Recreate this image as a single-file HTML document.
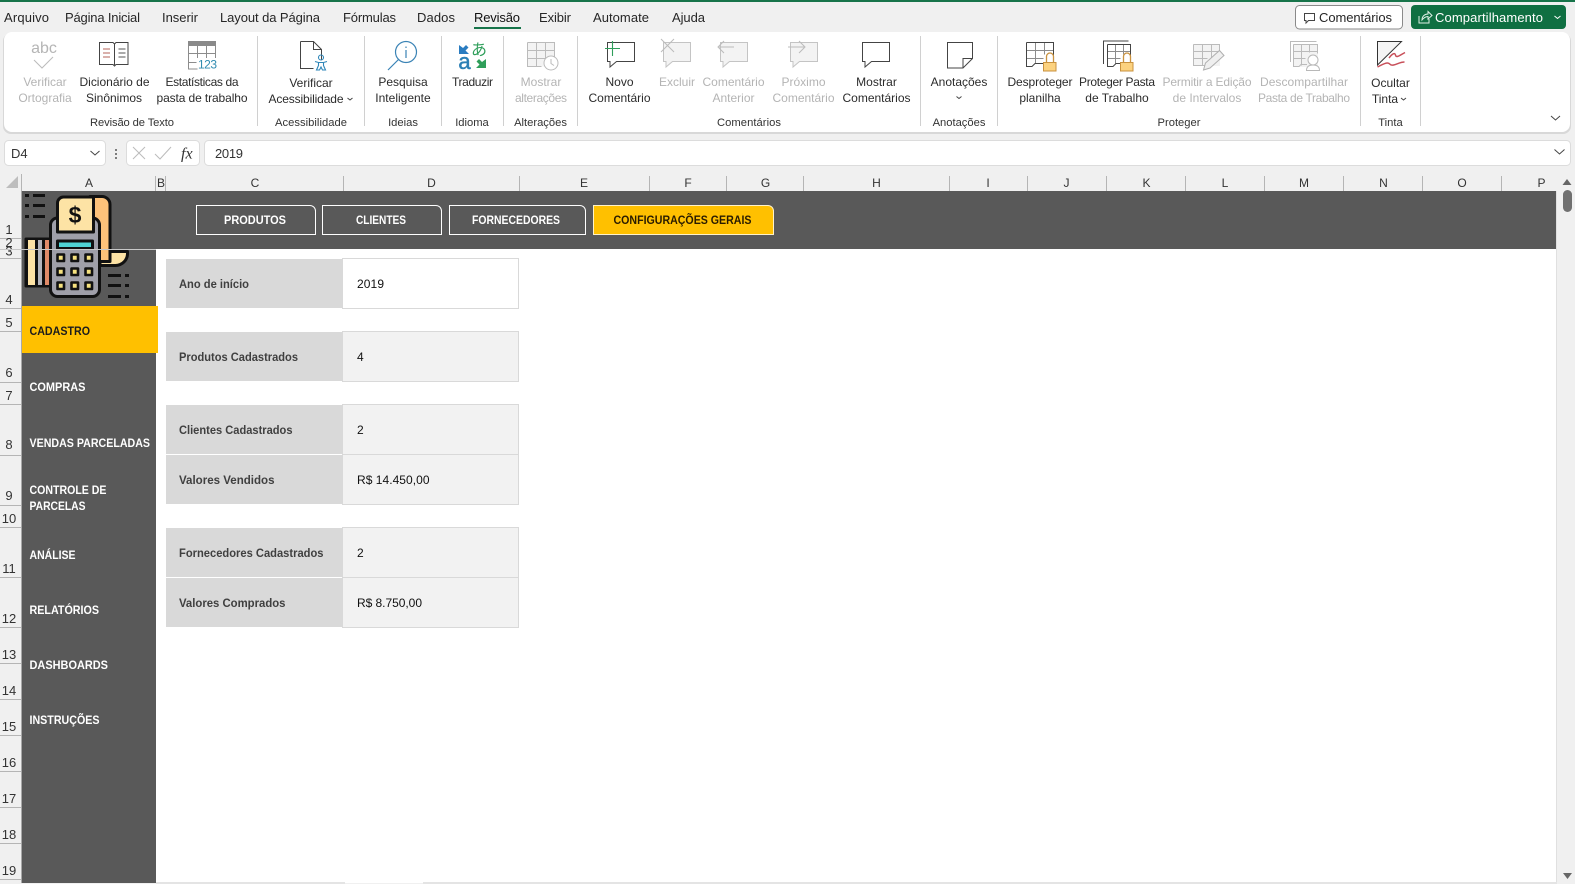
<!DOCTYPE html>
<html lang="pt-BR"><head><meta charset="utf-8"><title>Excel - Configurações Gerais</title>
<style>
html,body{margin:0;padding:0;background:#fff;overflow:hidden}
svg{display:block}
text{font-family:"Liberation Sans",sans-serif}
.t{font-size:13px;fill:#262626}
.r{font-size:12px;fill:#2b2b2b;text-anchor:middle}
.d{font-size:12px;fill:#b4b4b4;text-anchor:middle}
.g{font-size:11.2px;fill:#333;text-anchor:middle}
.c{font-size:12px;fill:#333;text-anchor:middle}
.n{font-size:13px;fill:#333;text-anchor:middle}
.s{font-size:12px;font-weight:bold;fill:#fff}
.b{font-size:12px;font-weight:bold;fill:#fff;text-anchor:middle}
.l{font-size:12px;font-weight:bold;fill:#404040}
.v{font-size:12px;fill:#111}
.i{fill:none;stroke:#444;stroke-width:1}
.x{fill:none;stroke:#bbb;stroke-width:1}
.m{fill:none;stroke:#8c8c8c;stroke-width:1}
</style></head><body>
<svg xmlns="http://www.w3.org/2000/svg" width="1575" height="884" viewBox="0 0 1575 884">
<rect width="1575" height="884" fill="#f0f0f0"/>
<rect width="1575" height="2" fill="#17744a"/>

<!-- tabs -->
<text class="t" x="4" y="22" textLength="45">Arquivo</text>
<text class="t" x="65" y="22" textLength="75">Página Inicial</text>
<text class="t" x="162" y="22" textLength="36">Inserir</text>
<text class="t" x="220" y="22" textLength="100">Layout da Página</text>
<text class="t" x="343" y="22" textLength="53">Fórmulas</text>
<text class="t" x="417" y="22" textLength="38">Dados</text>
<text class="t" x="474" y="22" textLength="46" style="fill:#111">Revisão</text>
<rect x="474" y="27" width="47" height="2" fill="#17744a"/>
<text class="t" x="539" y="22" textLength="32">Exibir</text>
<text class="t" x="593" y="22" textLength="56">Automate</text>
<text class="t" x="672" y="22" textLength="33">Ajuda</text>

<rect x="1295.5" y="5.5" width="107" height="23.5" rx="4" fill="#fff" stroke="#8a8a8a"/>
<path class="i" d="M1304.5 13.5h10v7h-6l-2.5 2.5v-2.5h-1.500z"/>
<text class="t" x="1319" y="22" textLength="73">Comentários</text>
<rect x="1411" y="5" width="155" height="24" rx="4" fill="#0f6f42"/>
<path d="M1419 16v7h10v-4M1422 20c0-4 3-6 6-6v-2.500l4 4-4 3.500v-2.500c-2 0-4 1-6 3.500z" fill="none" stroke="#dff0e6"/>
<text class="t" x="1435" y="22" textLength="108" style="fill:#fff">Compartilhamento</text>
<path d="M1554.500 16l3 2.500 3-2.500" fill="none" stroke="#fff"/>

<!-- ribbon -->
<rect x="3" y="33" width="1568" height="101" rx="8" fill="#d8d8d8"/>
<rect x="4" y="32" width="1566" height="100" rx="8" fill="#fff"/>
<g stroke="#d0d0d0" fill="none">
<path d="M257.500 36v90M364.500 36v90M441.500 36v90M503.500 36v90M577.500 36v90M920.500 36v90M997.500 36v90M1360.500 36v90M1420.500 36v90"/>
</g>

<!-- ribbon icons -->
<text x="44" y="53" text-anchor="middle" font-size="16" fill="#b5b5b5">abc</text>
<path d="M34 60l8 8 11-11" class="x"/>

<path class="i" d="M99.500 42.500h13.500l1.500 1.500 1.500-1.500h12v22h-12l-1.500 1.500-1.500-1.500h-13.500zM114.500 44v21"/>
<path d="M103 49h7M103 53h7M103 57h7" stroke="#b5635a" fill="none"/>
<path d="M118.500 49h7M118.500 53h7M118.500 57h7" stroke="#555" fill="none"/>

<rect x="188" y="41" width="28" height="5" fill="#8a8a8a"/>
<path class="m" d="M188.500 46v23h9M215.500 46v12M188.500 53.500h27M188.500 62.500h8M197.500 46v12M206.500 46v12"/>
<text x="207.500" y="68.500" text-anchor="middle" font-size="12" fill="#2f8bb0" textLength="19">123</text>

<path class="i" d="M300.500 41.500h13l8 8v10M300.500 41.500v27h13M313.500 41.500v8h8"/>
<g fill="none" stroke="#2e86b8" stroke-width="1.100"><circle cx="321" cy="57.500" r="2.500"/><path d="M315 61.500l3.500 1h5l3.500-1M318.500 62.500v3l-2 4.500h3l1.500-3 1.500 3h3l-2-4.500v-3"/></g>

<circle cx="406" cy="52" r="10.500" fill="none" stroke="#3a83b5" stroke-width="1.200"/>
<path d="M398.500 59.500L388 70" stroke="#3a83b5" stroke-width="1.200" fill="none"/>
<path d="M406 50v8M406 46.500v1.500" stroke="#3a83b5" stroke-width="1.200" fill="none"/>

<path d="M459 45v9h10l-3.500-3.500 3-3-2.500-2.500-3 3z" fill="#2a7cc0"/>
<text x="479" y="55" text-anchor="middle" font-size="16" fill="#2f9e5a" style='font-family:"Liberation Sans","Noto Sans CJK JP",sans-serif'>あ</text>
<text x="464.500" y="69" text-anchor="middle" font-size="22" fill="#2a7fb5" stroke="#2a7fb5" stroke-width=".5">a</text>
<path d="M486 59v9h-10l3.500-3.500-3-3 2.500-2.500 3 3z" fill="#2f9e5a"/>

<g class="x"><rect x="527.500" y="42.500" width="27" height="24" fill="#f3f3f3" stroke="none"/><path d="M527.500 42.500h27v16M527.500 42.500v24h14M527.500 50.500h27M527.500 58.500h27M536.500 42.500v24M545.500 42.500v16" stroke="#bbb"/><circle cx="551" cy="63" r="7" fill="#fff" stroke="#bbb"/><path d="M551 59v4.500l3 2" stroke="#bbb"/></g>

<path class="i" d="M607.500 42.500h27v19h-18l-6.500 5.500v-5.500h-2.500z"/>
<path d="M612.500 41v15M605 48.500h15" stroke="#2f9e5a" fill="none" stroke-width="1.100"/>

<path d="M663.500 42.500h27v19h-18l-6.500 5.500v-5.500h-2.500z" fill="#f3f3f3" stroke="#c4c4c4"/>
<path d="M661 39l13 13M674 39l-13 13" stroke="#bbb" fill="none"/>
<path d="M720.500 42.500h27v19h-18l-6.500 5.500v-5.500h-2.500z" fill="#f3f3f3" stroke="#c4c4c4"/>
<path d="M719 47h15M724 41l-6 6 6 6" stroke="#bbb" fill="none"/>
<path d="M790.500 42.500h27v19h-18l-6.500 5.500v-5.500h-2.500z" fill="#f3f3f3" stroke="#c4c4c4"/>
<path d="M788 47h16M799 41l6 6-6 6" stroke="#bbb" fill="none"/>
<path class="i" d="M862.500 42.500h27v19h-18l-6.500 5.500v-5.500h-2.500z"/>

<path class="i" d="M947.500 42.500h25v16l-9.500 9.500h-15.500zM972.500 58.500h-9.500v9.500"/>

<!-- Desproteger -->
<path class="m" d="M1026.500 50.500h27M1026.500 58.500h17M1035.500 42.500v21M1044.500 42.500v12"/>
<path class="i" d="M1026.500 42.500h27v13M1026.500 42.500v24h5.500l3-3h8"/>
<rect x="1043.500" y="62.500" width="12.500" height="8.500" fill="#fcd27f" stroke="#c9923f"/>
<path d="M1046.500 62v-5.500a3.500 3.500 0 0 1 7 0v5.500" fill="#fff" stroke="#c9923f" stroke-width="1.300"/>
<!-- Proteger -->
<path class="i" d="M1103.500 64v-23h25"/>
<path class="m" d="M1107.500 51.500h23M1107.500 58.500h13M1115.500 44.500v19M1123.500 44.500v10"/>
<path class="i" d="M1107.500 44.500h23v11M1107.500 44.500v22h5.500l3-3h6"/>
<rect x="1120.500" y="62.500" width="12.500" height="8.500" fill="#fcd27f" stroke="#c9923f"/>
<path d="M1123.500 62v-5.500a3.500 3.500 0 0 1 7 0v5.500" fill="#fff" stroke="#c9923f" stroke-width="1.300"/>
<!-- Permitir -->
<rect x="1193" y="44" width="27" height="22" fill="#f3f3f3"/>
<path class="x" d="M1193.500 44.500h26v8M1193.500 44.500v21h12M1193.500 51.500h26M1193.500 58.500h14M1202.500 44.500v21M1211.500 44.500v14"/>
<path d="M1203.500 70l2-7 14-12.500 4.500 5-14 12.500z" fill="#efefef" stroke="#b0b0b0"/>
<!-- Descompartilhar -->
<path class="x" d="M1290.500 62v-20.500h26"/>
<rect x="1293" y="44" width="25" height="23" fill="#f3f3f3"/>
<path class="x" d="M1293.500 44.500h24v9M1293.500 44.500v22h5.500l2-2h6M1293.500 51.500h24M1293.500 58.500h12M1301.500 44.500v21M1309.500 44.500v8"/>
<path d="M1306.500 70.500c0-4 2.500-5.500 6.500-5.500s6.500 1.500 6.500 5.500z" fill="#fff" stroke="#b8b8b8"/>
<circle cx="1313" cy="60" r="5" fill="#fff" stroke="#b8b8b8"/>
<!-- Tinta -->
<path d="M1377.500 41.500h24l-24 23.500z" fill="#f4f4f4" stroke="#333"/>
<path d="M1389 58c3-4 5-5 6-4s0 2.500 2 2.500 5-2.500 8-4M1377.500 67c4-2 7-4 10-4s2 3 6 2 7-3 11-3" fill="none" stroke="#c8505a" stroke-width="1.500"/>

<!-- ribbon text -->
<text class="d" x="45" y="86">Verificar</text><text class="d" x="45" y="102">Ortografia</text>
<text class="r" x="114.500" y="86" textLength="70">Dicionário de</text><text class="r" x="114" y="102">Sinônimos</text>
<text class="r" x="202" y="86" textLength="73">Estatísticas da</text><text class="r" x="202" y="102" textLength="91">pasta de trabalho</text>
<text class="r" x="311" y="87">Verificar</text><text class="r" x="306" y="103" textLength="75">Acessibilidade</text>
<path class="i" d="M347.500 98l2.500 2 2.500-2"/>
<text class="r" x="403" y="86">Pesquisa</text><text class="r" x="403" y="102">Inteligente</text>
<text class="r" x="472.500" y="86" textLength="41">Traduzir</text>
<text class="d" x="541" y="86">Mostrar</text><text class="d" x="541" y="102" textLength="52">alterações</text>
<text class="r" x="619.500" y="86">Novo</text><text class="r" x="619.500" y="102">Comentário</text>
<text class="d" x="677" y="86">Excluir</text>
<text class="d" x="733.500" y="86">Comentário</text><text class="d" x="733.500" y="102">Anterior</text>
<text class="d" x="803.500" y="86">Próximo</text><text class="d" x="803.500" y="102">Comentário</text>
<text class="r" x="876.500" y="86">Mostrar</text><text class="r" x="876.500" y="102">Comentários</text>
<text class="r" x="959" y="86">Anotações</text>
<path class="i" d="M956.500 96.500l2.500 2 2.500-2"/>
<text class="r" x="1040" y="86" textLength="65">Desproteger</text><text class="r" x="1040" y="102">planilha</text>
<text class="r" x="1117" y="86" textLength="76">Proteger Pasta</text><text class="r" x="1117" y="102">de Trabalho</text>
<text class="d" x="1207" y="86" textLength="89">Permitir a Edição</text><text class="d" x="1207" y="102">de Intervalos</text>
<text class="d" x="1304" y="86" textLength="88">Descompartilhar</text><text class="d" x="1304" y="102" textLength="92">Pasta de Trabalho</text>
<text class="r" x="1390.500" y="87">Ocultar</text><text class="r" x="1385" y="103">Tinta</text>
<path class="i" d="M1401 98l2.500 2 2.500-2"/>

<text class="g" x="132" y="126" textLength="84">Revisão de Texto</text>
<text class="g" x="311" y="126" textLength="72">Acessibilidade</text>
<text class="g" x="403" y="126">Ideias</text>
<text class="g" x="472" y="126">Idioma</text>
<text class="g" x="540.500" y="126">Alterações</text>
<text class="g" x="749" y="126" textLength="64">Comentários</text>
<text class="g" x="959" y="126">Anotações</text>
<text class="g" x="1179" y="126">Proteger</text>
<text class="g" x="1390.500" y="126">Tinta</text>
<path class="i" d="M1551 116l4.500 4 4.500-4"/>

<!-- formula bar -->
<rect x="4.500" y="140.500" width="101" height="25" rx="4" fill="#fff" stroke="#dcdcdc"/>
<text x="11" y="158" font-size="13" fill="#333">D4</text>
<path class="i" d="M90.500 151l4.500 4 4.500-4"/>
<path d="M116 149v2M116 153v2M116 157v2" stroke="#555" stroke-width="1.500" fill="none"/>
<rect x="126.500" y="140.500" width="73" height="25" rx="4" fill="#fff" stroke="#dcdcdc"/>
<path d="M133 147l12 12M145 147l-12 12M155 154l5 5 11-12" class="x"/>
<text x="181" y="158.500" font-size="16" font-style="italic" fill="#333" style='font-family:"Liberation Serif",serif'>fx</text>
<rect x="204.500" y="140.500" width="1366" height="25" rx="4" fill="#fff" stroke="#dcdcdc"/>
<text x="215" y="158" font-size="13" fill="#333" textLength="28">2019</text>
<path class="i" d="M1554.500 149.500l5 4.500 5-4.500"/>

<!-- column headers -->
<path d="M6 188h12v-12z" fill="#bdbdbd"/>
<g stroke="#b5b5b5" fill="none">
<path d="M21.500 174v17M155.500 176v15M165.500 176v15M343.500 176v15M519.500 176v15M649.500 176v15M726.500 176v15M803.500 176v15M949.500 176v15M1027.500 176v15M1106.500 176v15M1185.500 176v15M1264.500 176v15M1343.500 176v15M1422.500 176v15M1501.500 176v15"/>
</g>
<text class="c" x="89" y="187">A</text><text class="c" x="161" y="187">B</text><text class="c" x="255" y="187">C</text><text class="c" x="431.500" y="187">D</text>
<text class="c" x="584" y="187">E</text><text class="c" x="688" y="187">F</text><text class="c" x="765.500" y="187">G</text><text class="c" x="876.500" y="187">H</text>
<text class="c" x="988" y="187">I</text><text class="c" x="1066.500" y="187">J</text><text class="c" x="1146.500" y="187">K</text><text class="c" x="1225" y="187">L</text>
<text class="c" x="1304" y="187">M</text><text class="c" x="1383.500" y="187">N</text><text class="c" x="1462" y="187">O</text><text class="c" x="1541.500" y="187">P</text>

<!-- sheet -->
<rect x="22" y="191" width="1535" height="692" fill="#fff"/>
<rect x="22" y="191" width="1535" height="58" fill="#595959"/>
<rect x="22" y="249" width="134" height="634" fill="#595959"/>
<rect x="21" y="191" width="1" height="692" fill="#a8a8a8"/>
<rect x="1556" y="191" width="1" height="692" fill="#e0e0e0"/>
<rect x="156" y="882" width="189" height="2" fill="#e4e4e4"/><rect x="423" y="882" width="1134" height="2" fill="#e4e4e4"/>

<!-- row headers -->
<g stroke="#b5b5b5" fill="none">
<path d="M0 238.500h21M0 249.500h21M0 258.500h21M0 308.500h21M0 331.500h21M0 382.500h21M0 404.500h21M0 455.500h21M0 505.500h21M0 527.500h21M0 577.500h21M0 627.500h21M0 663.500h21M0 699.500h21M0 735.500h21M0 771.500h21M0 807.500h21M0 843.500h21M0 879.500h21"/>
</g>
<text class="n" x="9" y="234">1</text><text class="n" x="9" y="247" font-size="10">2</text><text class="n" x="9" y="255.500">3</text>
<text class="n" x="9" y="304">4</text><text class="n" x="9" y="327">5</text><text class="n" x="9" y="377">6</text><text class="n" x="9" y="400">7</text>
<text class="n" x="9" y="449">8</text><text class="n" x="9" y="500">9</text><text class="n" x="9" y="523">10</text><text class="n" x="9" y="573">11</text>
<text class="n" x="9" y="623">12</text><text class="n" x="9" y="659">13</text><text class="n" x="9" y="695">14</text><text class="n" x="9" y="731">15</text>
<text class="n" x="9" y="767">16</text><text class="n" x="9" y="803">17</text><text class="n" x="9" y="839">18</text><text class="n" x="9" y="875">19</text>

<!-- logo -->
<g stroke="#111" stroke-width="3" stroke-linejoin="round">
<rect x="26" y="239" width="25" height="47" fill="#111"/>
<rect x="28" y="240" width="7" height="45" fill="#fde3a5" stroke="none"/>
<rect x="38" y="240" width="4" height="45" fill="#b5b5bd" stroke="none"/>
<rect x="45" y="240" width="5" height="45" fill="#e08a68" stroke="none"/>
<path d="M90 196.500h12a8 8 0 0 1 8 8v60H96z" fill="#fdc27a"/>
<path d="M110 251.500h17.500v2a12 12 0 0 1-12 12H100v-4h10z" fill="#fde3a5"/>
<rect x="50.500" y="218" width="49" height="78.500" rx="7" fill="#9f9fa9"/>
<path d="M57.500 232v-29a6 6 0 0 1 6-6h30v35z" fill="#fde3a5"/>
<rect x="57.500" y="241" width="35" height="7.500" fill="#4fd3d3"/>
<g fill="#f6e27f" stroke-width="2.600">
<rect x="57.500" y="254.500" width="6.500" height="6.500"/><rect x="71.500" y="254.500" width="6.500" height="6.500"/><rect x="85.500" y="254.500" width="6.500" height="6.500"/>
<rect x="57.500" y="268.500" width="6.500" height="6.500"/><rect x="71.500" y="268.500" width="6.500" height="6.500"/><rect x="85.500" y="268.500" width="6.500" height="6.500"/>
<rect x="57.500" y="282.500" width="6.500" height="6.500"/><rect x="71.500" y="282.500" width="6.500" height="6.500"/><rect x="85.500" y="282.500" width="6.500" height="6.500"/>
</g>
</g>
<text x="75" y="223" text-anchor="middle" font-size="23" font-weight="bold" fill="#111">$</text>
<g fill="#111">
<rect x="25" y="194" width="4" height="3"/><rect x="33" y="194" width="12" height="3"/>
<rect x="25" y="204" width="4" height="3"/><rect x="33" y="204" width="12" height="3"/>
<rect x="25" y="215" width="4" height="3"/><rect x="33" y="215" width="12" height="3"/>
<rect x="108" y="274" width="13" height="3"/><rect x="125" y="274" width="4" height="3"/>
<rect x="108" y="284" width="13" height="3"/><rect x="125" y="284" width="4" height="3"/>
<rect x="108" y="295" width="13" height="3"/><rect x="125" y="295" width="4" height="3"/>
</g>
<rect x="0" y="249" width="156" height="1" fill="#c8c8c8"/>

<!-- sidebar -->
<rect x="22" y="306" width="136" height="47" fill="#ffc000"/>
<text class="s" x="29.500" y="335" textLength="60.500" lengthAdjust="spacingAndGlyphs" style="fill:#1c1c1c">CADASTRO</text>
<text class="s" x="29.500" y="391" textLength="56" lengthAdjust="spacingAndGlyphs">COMPRAS</text>
<text class="s" x="29.500" y="447" textLength="120.500" lengthAdjust="spacingAndGlyphs">VENDAS PARCELADAS</text>
<text class="s" x="29.500" y="494" textLength="77" lengthAdjust="spacingAndGlyphs">CONTROLE DE</text>
<text class="s" x="29.500" y="510" textLength="56" lengthAdjust="spacingAndGlyphs">PARCELAS</text>
<text class="s" x="29.500" y="559" textLength="46" lengthAdjust="spacingAndGlyphs">ANÁLISE</text>
<text class="s" x="29.500" y="614" textLength="69.500" lengthAdjust="spacingAndGlyphs">RELATÓRIOS</text>
<text class="s" x="29.500" y="669" textLength="78.500" lengthAdjust="spacingAndGlyphs">DASHBOARDS</text>
<text class="s" x="29.500" y="724" textLength="70" lengthAdjust="spacingAndGlyphs">INSTRUÇÕES</text>

<!-- top buttons -->
<g fill="#595959" stroke="#fff" stroke-width="1">
<path d="M196.500 205.500H310a5.500 5.500 0 0 1 5.500 5.500v23.500H196.500z"/>
<path d="M322.500 205.500H436a5.500 5.500 0 0 1 5.500 5.500v23.500H322.500z"/>
<path d="M449.500 205.500H580a5.500 5.500 0 0 1 5.500 5.500v23.500H449.500z"/>
<path d="M593.500 205.500H768a5.500 5.500 0 0 1 5.500 5.500v23.500H593.500z" fill="#ffc000" stroke="#fff2c8"/>
</g>
<text class="b" x="255" y="224" textLength="62" lengthAdjust="spacingAndGlyphs">PRODUTOS</text>
<text class="b" x="381" y="224" textLength="50" lengthAdjust="spacingAndGlyphs">CLIENTES</text>
<text class="b" x="516" y="224" textLength="88" lengthAdjust="spacingAndGlyphs">FORNECEDORES</text>
<text class="b" x="682.500" y="224" textLength="138" lengthAdjust="spacingAndGlyphs" style="fill:#2a1c00">CONFIGURAÇÕES GERAIS</text>

<!-- table -->
<g fill="#d9d9d9">
<rect x="166" y="259" width="177" height="49"/>
<rect x="166" y="332" width="177" height="49"/>
<rect x="166" y="405" width="177" height="49"/>
<rect x="166" y="455" width="177" height="49"/>
<rect x="166" y="528" width="177" height="49"/>
<rect x="166" y="578" width="177" height="49"/>
</g>
<g stroke="#d9d9d9" fill="#f2f2f2">
<rect x="342.500" y="258.500" width="176" height="50" fill="#fff"/>
<rect x="342.500" y="331.500" width="176" height="50"/>
<rect x="342.500" y="404.500" width="176" height="50"/>
<rect x="342.500" y="454.500" width="176" height="50"/>
<rect x="342.500" y="527.500" width="176" height="50"/>
<rect x="342.500" y="577.500" width="176" height="50"/>
</g>
<text class="l" x="179" y="288" textLength="70" lengthAdjust="spacingAndGlyphs">Ano de início</text>
<text class="l" x="179" y="361" textLength="119" lengthAdjust="spacingAndGlyphs">Produtos Cadastrados</text>
<text class="l" x="179" y="434" textLength="113.500" lengthAdjust="spacingAndGlyphs">Clientes Cadastrados</text>
<text class="l" x="179" y="484" textLength="95.500" lengthAdjust="spacingAndGlyphs">Valores Vendidos</text>
<text class="l" x="179" y="557" textLength="144.500" lengthAdjust="spacingAndGlyphs">Fornecedores Cadastrados</text>
<text class="l" x="179" y="607" textLength="106.500" lengthAdjust="spacingAndGlyphs">Valores Comprados</text>
<text class="v" x="357" y="288" textLength="27">2019</text>
<text class="v" x="357" y="361">4</text>
<text class="v" x="357" y="434">2</text>
<text class="v" x="357" y="484" textLength="72.500">R$ 14.450,00</text>
<text class="v" x="357" y="557">2</text>
<text class="v" x="357" y="607" textLength="65">R$ 8.750,00</text>

<!-- scrollbar -->
<path d="M1562.500 185l4.500-6 4.500 6z" fill="#666"/>
<rect x="1563" y="190" width="9" height="22" rx="4.500" fill="#707070"/>
<path d="M1563 873l4.500 6 4.500-6z" fill="#666"/>
</svg>
</body></html>
